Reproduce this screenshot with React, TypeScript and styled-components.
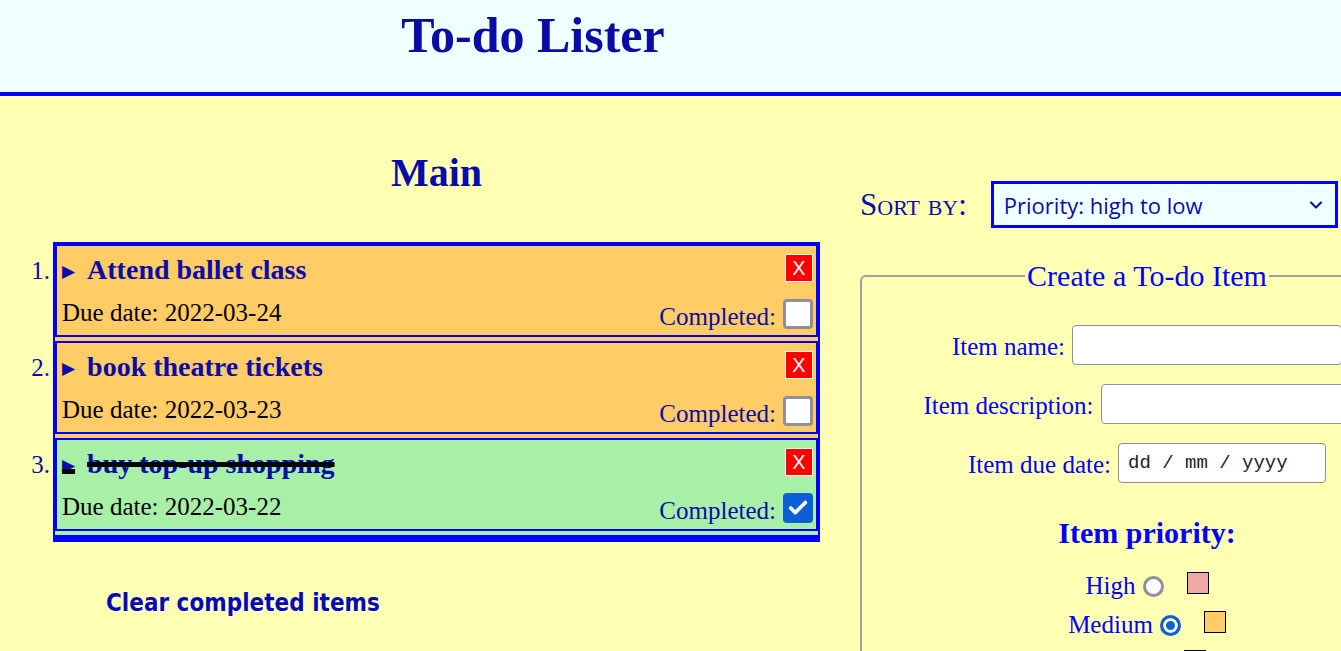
import React, { useState } from 'react';
import styled, { createGlobalStyle, css } from 'styled-components';
import { Check, ChevronDown } from 'lucide-react';

const Colors = {
  page: '#ffffb4',
  header: '#f0ffff',
  blue: '#0000ff',
  navy: '#0b0baa',
  red: '#ff0000',
  grey: '#8f8f9d',
  tick: '#0b5fd7',
  high: '#f0a8a8',
  medium: '#ffcc66',
  low: '#a8f0a8',
};

type Priority = 'high' | 'medium' | 'low';

type Todo = {
  id: number;
  name: string;
  due: string;
  priority: Priority;
  done: boolean;
};

const initialTodos: Todo[] = [
  { id: 1, name: 'Attend ballet class', due: '2022-03-24', priority: 'medium', done: false },
  { id: 2, name: 'book theatre tickets', due: '2022-03-23', priority: 'medium', done: false },
  { id: 3, name: 'buy top-up shopping', due: '2022-03-22', priority: 'low', done: true },
];

const priorities: { key: Priority; label: string }[] = [
  { key: 'high', label: 'High' },
  { key: 'medium', label: 'Medium' },
  { key: 'low', label: 'Low' },
];

const GlobalStyle = createGlobalStyle`
  html, body {
    margin: 0;
    padding: 0;
    background: ${Colors.page};
    overflow: hidden;
  }
  body {
    font-family: "Liberation Serif", "Times New Roman", serif;
  }
`;

const App = () => {
  const [todos, setTodos] = useState<Todo[]>(initialTodos);
  const [priority, setPriority] = useState<Priority>('medium');
  const [sort, setSort] = useState('priority-desc');

  const toggle = (id: number) =>
    setTodos((list) => list.map((t) => (t.id === id ? { ...t, done: !t.done } : t)));

  const remove = (id: number) => setTodos((list) => list.filter((t) => t.id !== id));

  const clearCompleted = () => setTodos((list) => list.filter((t) => !t.done));

  return (
    <Page>
      <GlobalStyle />
      <Header>
        <Title>To-do Lister</Title>
      </Header>
      <Content>
        <MainColumn>
          <MainHeading>Main</MainHeading>
          <List>
            {todos.map((todo, i) => (
              <Item key={todo.id} $priority={todo.priority}>
                <Number>{i + 1}.</Number>
                <Card>
                  <TopRow>
                    <ItemTitle $done={todo.done}>
                      <Marker>▶</Marker>
                      {todo.name}
                    </ItemTitle>
                    <DeleteButton onClick={() => remove(todo.id)}>X</DeleteButton>
                  </TopRow>
                  <BottomRow>
                    <DueDate>Due date: {todo.due}</DueDate>
                    <CompletedGroup>
                      <CompletedText>Completed:</CompletedText>
                      <CheckBox
                        role="checkbox"
                        aria-checked={todo.done}
                        $checked={todo.done}
                        onClick={() => toggle(todo.id)}
                      >
                        {todo.done && <Check size={22} strokeWidth={4} color="#fff" />}
                      </CheckBox>
                    </CompletedGroup>
                  </BottomRow>
                </Card>
              </Item>
            ))}
          </List>
          <ClearButton onClick={clearCompleted}>Clear completed items</ClearButton>
        </MainColumn>

        <Sidebar>
          <SortRow>
            <SortLabel>Sort by:</SortLabel>
            <SelectWrap>
              <Select value={sort} onChange={(e) => setSort(e.target.value)}>
                <option value="priority-desc">Priority: high to low</option>
                <option value="priority-asc">Priority: low to high</option>
                <option value="date-asc">Due date: soonest first</option>
              </Select>
              <Chevron>
                <ChevronDown size={20} strokeWidth={2.5} />
              </Chevron>
            </SelectWrap>
          </SortRow>

          <Fieldset>
            <Legend>Create a To-do Item</Legend>
            <FormRow>
              <FieldLabel>Item name:</FieldLabel>
              <TextInput $width={270} />
            </FormRow>
            <FormRow>
              <FieldLabel>Item description:</FieldLabel>
              <TextInput $width={270} />
            </FormRow>
            <FormRow>
              <FieldLabel>Item due date:</FieldLabel>
              <DateInput $width={208} placeholder="dd / mm / yyyy" />
            </FormRow>
            <PriorityHeading>Item priority:</PriorityHeading>
            {priorities.map((p) => (
              <PriorityRow key={p.key} onClick={() => setPriority(p.key)}>
                <span>{p.label}</span>
                <Radio $checked={priority === p.key} />
                <Swatch $priority={p.key} />
              </PriorityRow>
            ))}
          </Fieldset>
        </Sidebar>
      </Content>
    </Page>
  );
};

const Page = styled.div`
  width: 1440px;
  min-height: 100vh;
  background: ${Colors.page};
`;

const Header = styled.header`
  height: 96px;
  box-sizing: border-box;
  padding-top: 6px;
  background: ${Colors.header};
  border-bottom: 4px solid ${Colors.blue};
`;

const Title = styled.h1`
  width: 1066px;
  margin: 0;
  text-align: center;
  font-size: 50px;
  line-height: 58px;
  font-weight: bold;
  color: ${Colors.navy};
`;

const Content = styled.div`
  display: grid;
  grid-template-columns: 860px 574px;
  align-items: start;
`;

const MainColumn = styled.main`
  padding: 54px 0 0 53px;
`;

const MainHeading = styled.h2`
  width: 767px;
  margin: 0;
  text-align: center;
  font-size: 40px;
  line-height: 46px;
  color: ${Colors.navy};
`;

const List = styled.ol`
  width: 767px;
  box-sizing: border-box;
  margin: 46px 0 0;
  padding: 0;
  list-style: none;
  border: 2px solid ${Colors.blue};
  border-bottom-width: 7px;
`;

const Item = styled.li<{ $priority: Priority }>`
  position: relative;
  padding-bottom: 4px;
  background: ${({ $priority }) => Colors[$priority]};
`;

const Number = styled.span`
  position: absolute;
  right: calc(100% + 5px);
  top: 11px;
  font-size: 25px;
  line-height: 32px;
  color: ${Colors.navy};
`;

const Card = styled.div`
  border: 2px solid ${Colors.blue};
  padding: 8px 3px 3.5px 5px;
`;

const TopRow = styled.div`
  display: flex;
  justify-content: space-between;
  align-items: flex-start;
  height: 32.5px;
`;

const ItemTitle = styled.h3<{ $done: boolean }>`
  margin: 0;
  height: 32px;
  font-size: 28px;
  line-height: 32px;
  font-weight: bold;
  white-space: nowrap;
  color: ${Colors.navy};
  ${({ $done }) =>
    $done &&
    css`
      text-decoration: line-through;
      text-decoration-color: #000;
      text-decoration-thickness: 5px;
    `}
`;

const Marker = styled.span`
  font-family: "DejaVu Sans", sans-serif;
  font-size: 17px;
  line-height: 0;
  margin-right: 12px;
  vertical-align: 2px;
`;

const DeleteButton = styled.button`
  width: 28px;
  height: 28px;
  padding: 0;
  border: 1px solid #fff;
  background: ${Colors.red};
  color: #fff;
  font-family: "Liberation Sans", Arial, sans-serif;
  font-size: 20px;
  line-height: 1;
  cursor: pointer;
`;

const BottomRow = styled.div`
  display: flex;
  justify-content: space-between;
  align-items: flex-start;
  margin-top: 11px;
`;

const DueDate = styled.span`
  font-size: 25px;
  line-height: 30px;
  color: #000;
`;

const CompletedGroup = styled.label`
  display: flex;
  align-items: flex-start;
  gap: 7px;
`;

const CompletedText = styled.span`
  padding-top: 4px;
  font-size: 25px;
  line-height: 30px;
  color: ${Colors.navy};
`;

const CheckBox = styled.span<{ $checked: boolean }>`
  display: inline-flex;
  align-items: center;
  justify-content: center;
  width: 30px;
  height: 30px;
  margin-top: 1px;
  box-sizing: border-box;
  border-radius: 4px;
  cursor: pointer;
  ${({ $checked }) =>
    $checked
      ? css`
          background: ${Colors.tick};
        `
      : css`
          background: #fff;
          border: 3px solid ${Colors.grey};
        `}
`;

const ClearButton = styled.button`
  margin: 47px 0 0 53px;
  padding: 0;
  border: none;
  background: none;
  font-family: "DejaVu Sans Condensed", "DejaVu Sans", Verdana, sans-serif;
  font-stretch: condensed;
  font-weight: bold;
  font-size: 24px;
  line-height: 28px;
  color: ${Colors.navy};
  text-shadow: 1px 1px 1px #fff, 0 0 2px #fff;
  cursor: pointer;
`;

const Sidebar = styled.aside`
  padding-top: 85px;
`;

const SortRow = styled.div`
  display: flex;
  align-items: center;
`;

const SortLabel = styled.span`
  margin-right: 24px;
  font-size: 31px;
  font-variant: small-caps;
  color: ${Colors.navy};
`;

const SelectWrap = styled.div`
  position: relative;
  width: 347px;
`;

const Select = styled.select`
  width: 100%;
  height: 47px;
  box-sizing: border-box;
  padding: 0 40px 0 10px;
  appearance: none;
  border: 3px solid ${Colors.blue};
  border-radius: 0;
  background: ${Colors.header};
  color: ${Colors.navy};
  font-family: "Open Sans", "Noto Sans", sans-serif;
  font-size: 22px;
  outline: none;
`;

const Chevron = styled.span`
  position: absolute;
  right: 12px;
  top: 50%;
  transform: translateY(-50%);
  display: flex;
  color: ${Colors.navy};
  pointer-events: none;
`;

const Fieldset = styled.fieldset`
  margin: 31px 0 0;
  width: 574px;
  box-sizing: border-box;
  padding: 32px 10px 20px;
  border: 2px solid #a0a0a0;
  border-radius: 6px;
`;

const Legend = styled.legend`
  margin: 0 auto;
  padding: 0 2px;
  font-size: 30px;
  color: ${Colors.blue};
`;

const FormRow = styled.div`
  display: flex;
  justify-content: center;
  align-items: center;
  gap: 7px;
  height: 40px;
  margin-bottom: 19px;
`;

const FieldLabel = styled.label`
  padding-top: 4px;
  font-size: 25px;
  color: ${Colors.blue};
`;

const TextInput = styled.input<{ $width: number }>`
  width: ${({ $width }) => $width}px;
  height: 40px;
  box-sizing: border-box;
  flex-shrink: 0;
  border: 1px solid ${Colors.grey};
  border-radius: 4px;
  background: #fff;
  font-size: 20px;
  outline: none;
`;

const DateInput = styled(TextInput)`
  padding-left: 9px;
  font-family: "Liberation Mono", "Courier New", monospace;
  font-size: 19px;
  color: #222;

  &::placeholder {
    color: #222;
    opacity: 1;
  }
`;

const PriorityHeading = styled.h3`
  margin: 33px 0 16px;
  text-align: center;
  font-size: 30px;
  line-height: 34.5px;
  font-weight: bold;
  color: ${Colors.blue};
`;

const PriorityRow = styled.div`
  display: flex;
  justify-content: center;
  align-items: center;
  height: 39px;
  font-size: 25px;
  color: ${Colors.blue};
  cursor: pointer;
`;

const Radio = styled.span<{ $checked: boolean }>`
  width: 21px;
  height: 21px;
  margin-left: 7px;
  box-sizing: border-box;
  border-radius: 50%;
  background: #fff;
  ${({ $checked }) =>
    $checked
      ? css`
          border: 3px solid ${Colors.tick};
          box-shadow: inset 0 0 0 3px #fff;
          background: ${Colors.tick};
        `
      : css`
          border: 3px solid ${Colors.grey};
        `}
`;

const Swatch = styled.span<{ $priority: Priority }>`
  width: 22px;
  height: 22px;
  margin: 0 0 7px 23px;
  box-sizing: border-box;
  border: 1.5px solid #000;
  background: ${({ $priority }) => Colors[$priority]};
`;

export default App;
